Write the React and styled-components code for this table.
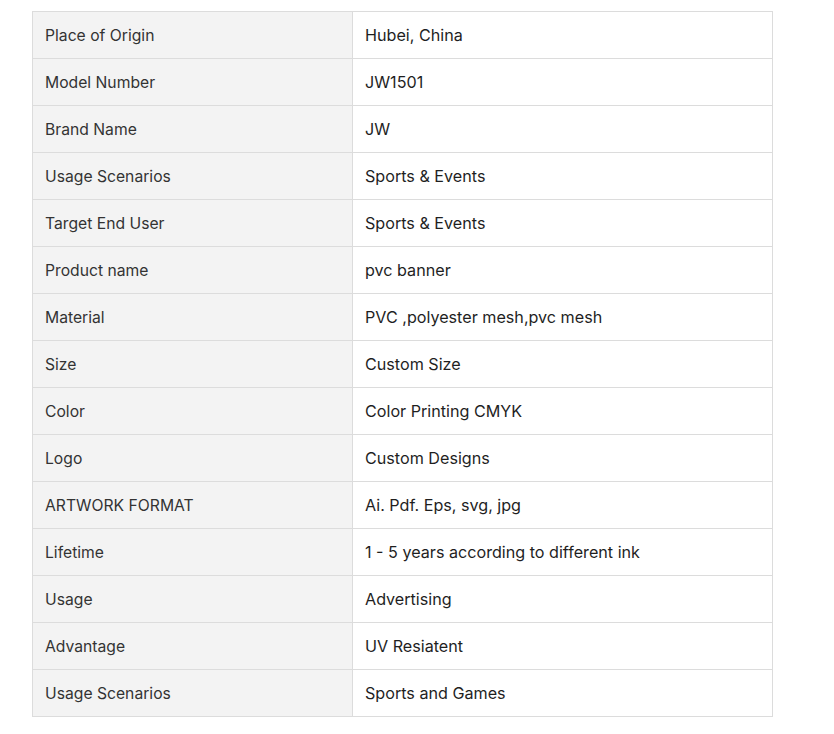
import React from "react";
import styled, { createGlobalStyle } from "styled-components";

const Global = createGlobalStyle`
  html, body { margin: 0; padding: 0; background: #fff; }
  body { font-family: Inter, "Liberation Sans", sans-serif; }
`;

const Page = styled.div`
  padding: 11px 0 0 32px;
`;

const Table = styled.table`
  border-collapse: collapse;
  width: 741px;
  table-layout: fixed;
  font-family: Inter, "Liberation Sans", sans-serif;
  font-size: 16px;
`;

const Row = styled.tr`
  height: 47px;
`;

const Cell = styled.td`
  border: 1px solid #dcdcdc;
  padding: 0 12px;
  vertical-align: middle;
  background: ${(p) => (p.$label ? "#f3f3f3" : "#fff")};
  color: ${(p) => (p.$label ? "#333" : "#1f1f1f")};
  font-size: ${(p) => (p.$label ? "15.7px" : "16.15px")};
  font-weight: 400;
  width: ${(p) => (p.$label ? "320px" : "auto")};
  box-sizing: border-box;
`;

const rows = [
  ["Place of Origin", "Hubei, China"],
  ["Model Number", "JW1501"],
  ["Brand Name", "JW"],
  ["Usage Scenarios", "Sports & Events"],
  ["Target End User", "Sports & Events"],
  ["Product name", "pvc banner"],
  ["Material", "PVC ,polyester mesh,pvc mesh"],
  ["Size", "Custom Size"],
  ["Color", "Color Printing CMYK"],
  ["Logo", "Custom Designs"],
  ["ARTWORK FORMAT", "Ai. Pdf. Eps, svg, jpg"],
  ["Lifetime", "1 - 5 years according to different ink"],
  ["Usage", "Advertising"],
  ["Advantage", "UV Resiatent"],
  ["Usage Scenarios", "Sports and Games"],
];

export default function App() {
  return (
    <>
      <Global />
      <Page>
        <Table>
          <tbody>
            {rows.map(([k, v], i) => (
              <Row key={i}>
                <Cell $label>{k}</Cell>
                <Cell>{v}</Cell>
              </Row>
            ))}
          </tbody>
        </Table>
      </Page>
    </>
  );
}
